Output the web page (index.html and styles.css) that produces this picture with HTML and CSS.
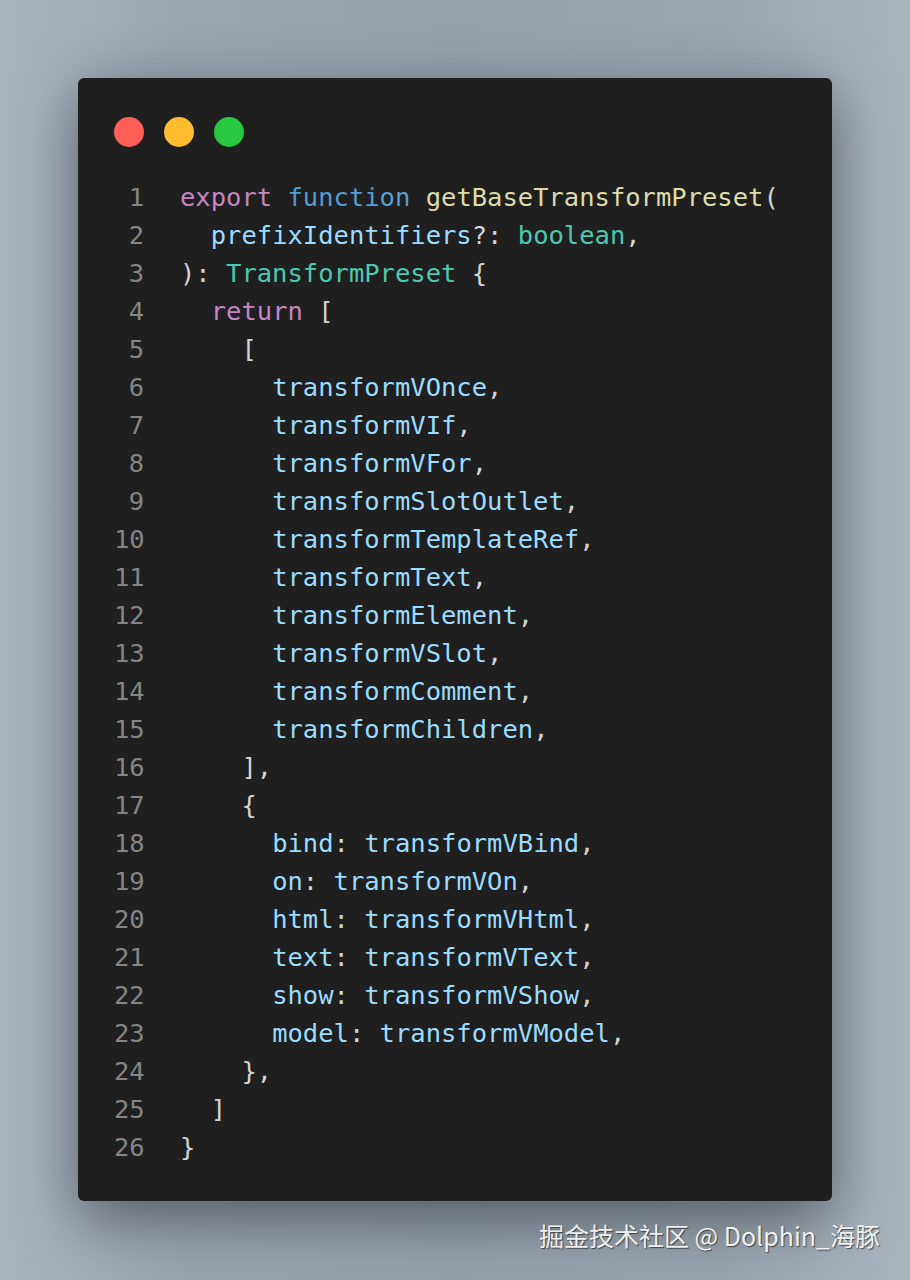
FILE: index.html
```html
<!DOCTYPE html>
<html lang="zh">
<head>
<meta charset="utf-8">
<title>getBaseTransformPreset</title>
<link rel="stylesheet" href="styles.css">
</head>
<body>
<div class="page">
  <div class="card">
    <div class="lights">
      <span class="dot red"></span>
      <span class="dot yellow"></span>
      <span class="dot green"></span>
    </div>
    <div class="code">
      <div class="line"><span class="ln">1</span><span class="src"><span class="kw">export</span> <span class="st">function</span> <span class="fn">getBaseTransformPreset</span><span class="p">(</span></span></div>
      <div class="line"><span class="ln">2</span><span class="src">  <span class="v">prefixIdentifiers</span><span class="p">?: </span><span class="ty">boolean</span><span class="p">,</span></span></div>
      <div class="line"><span class="ln">3</span><span class="src"><span class="p">): </span><span class="ty">TransformPreset</span><span class="p"> {</span></span></div>
      <div class="line"><span class="ln">4</span><span class="src">  <span class="kw">return</span><span class="p"> [</span></span></div>
      <div class="line"><span class="ln">5</span><span class="src"><span class="p">    [</span></span></div>
      <div class="line"><span class="ln">6</span><span class="src">      <span class="v">transformVOnce</span><span class="p">,</span></span></div>
      <div class="line"><span class="ln">7</span><span class="src">      <span class="v">transformVIf</span><span class="p">,</span></span></div>
      <div class="line"><span class="ln">8</span><span class="src">      <span class="v">transformVFor</span><span class="p">,</span></span></div>
      <div class="line"><span class="ln">9</span><span class="src">      <span class="v">transformSlotOutlet</span><span class="p">,</span></span></div>
      <div class="line"><span class="ln">10</span><span class="src">      <span class="v">transformTemplateRef</span><span class="p">,</span></span></div>
      <div class="line"><span class="ln">11</span><span class="src">      <span class="v">transformText</span><span class="p">,</span></span></div>
      <div class="line"><span class="ln">12</span><span class="src">      <span class="v">transformElement</span><span class="p">,</span></span></div>
      <div class="line"><span class="ln">13</span><span class="src">      <span class="v">transformVSlot</span><span class="p">,</span></span></div>
      <div class="line"><span class="ln">14</span><span class="src">      <span class="v">transformComment</span><span class="p">,</span></span></div>
      <div class="line"><span class="ln">15</span><span class="src">      <span class="v">transformChildren</span><span class="p">,</span></span></div>
      <div class="line"><span class="ln">16</span><span class="src"><span class="p">    ],</span></span></div>
      <div class="line"><span class="ln">17</span><span class="src"><span class="p">    {</span></span></div>
      <div class="line"><span class="ln">18</span><span class="src">      <span class="v">bind</span><span class="p">: </span><span class="v">transformVBind</span><span class="p">,</span></span></div>
      <div class="line"><span class="ln">19</span><span class="src">      <span class="v">on</span><span class="p">: </span><span class="v">transformVOn</span><span class="p">,</span></span></div>
      <div class="line"><span class="ln">20</span><span class="src">      <span class="v">html</span><span class="p">: </span><span class="v">transformVHtml</span><span class="p">,</span></span></div>
      <div class="line"><span class="ln">21</span><span class="src">      <span class="v">text</span><span class="p">: </span><span class="v">transformVText</span><span class="p">,</span></span></div>
      <div class="line"><span class="ln">22</span><span class="src">      <span class="v">show</span><span class="p">: </span><span class="v">transformVShow</span><span class="p">,</span></span></div>
      <div class="line"><span class="ln">23</span><span class="src">      <span class="v">model</span><span class="p">: </span><span class="v">transformVModel</span><span class="p">,</span></span></div>
      <div class="line"><span class="ln">24</span><span class="src"><span class="p">    },</span></span></div>
      <div class="line"><span class="ln">25</span><span class="src"><span class="p">  ]</span></span></div>
      <div class="line"><span class="ln">26</span><span class="src"><span class="p">}</span></span></div>
    </div>
  </div>
  <div class="watermark">掘金技术社区 @ Dolphin_海豚</div>
</div>
</body>
</html>
```
FILE: styles.css
```css
html, body {
  margin: 0;
  padding: 0;
}
body {
  width: 910px;
  height: 1280px;
  overflow: hidden;
  background: linear-gradient(90deg, #a9b4be 0%, #9aa5af 20%, #96a1ab 50%, #9aa5af 80%, #a9b4be 100%);
}
.page {
  display: flex;
  flex-direction: column;
  padding-top: 78px;
}
.card {
  margin: 0 78px;
  background: #1f1f1f;
  border-radius: 6px;
  padding: 39px 36px 35px 36px;
  box-shadow: 0 18px 60px rgba(40, 45, 52, 0.6);
}
.lights {
  display: flex;
  gap: 20px;
  height: 30px;
}
.dot {
  width: 30px;
  height: 30px;
  border-radius: 50%;
}
.red { background: #ff5f57; }
.yellow { background: #febc2e; }
.green { background: #28c840; }
.code {
  margin-top: 31px;
  display: flex;
  flex-direction: column;
  font-family: "DejaVu Sans Mono", "Liberation Mono", monospace;
  font-size: 25.5px;
  line-height: 38px;
}
.line {
  display: flex;
  gap: 36px;
  height: 38px;
}
.ln {
  width: 30px;
  flex: none;
  text-align: right;
  color: #858585;
}
.src {
  white-space: pre;
  color: #d4d4d4;
}
.kw { color: #c586c0; }
.st { color: #569cd6; }
.fn { color: #dcdcaa; }
.v { color: #9cdcfe; }
.ty { color: #4ec9b0; }
.p { color: #d4d4d4; }
.watermark {
  margin-top: 18px;
  padding-right: 30px;
  text-align: right;
  font-family: "Noto Sans CJK SC", "Noto Sans", sans-serif;
  font-size: 25px;
  line-height: 32px;
  color: #f0f0f0;
  text-shadow: 1px 1px 1px rgba(0, 0, 0, 0.55);
}
```
